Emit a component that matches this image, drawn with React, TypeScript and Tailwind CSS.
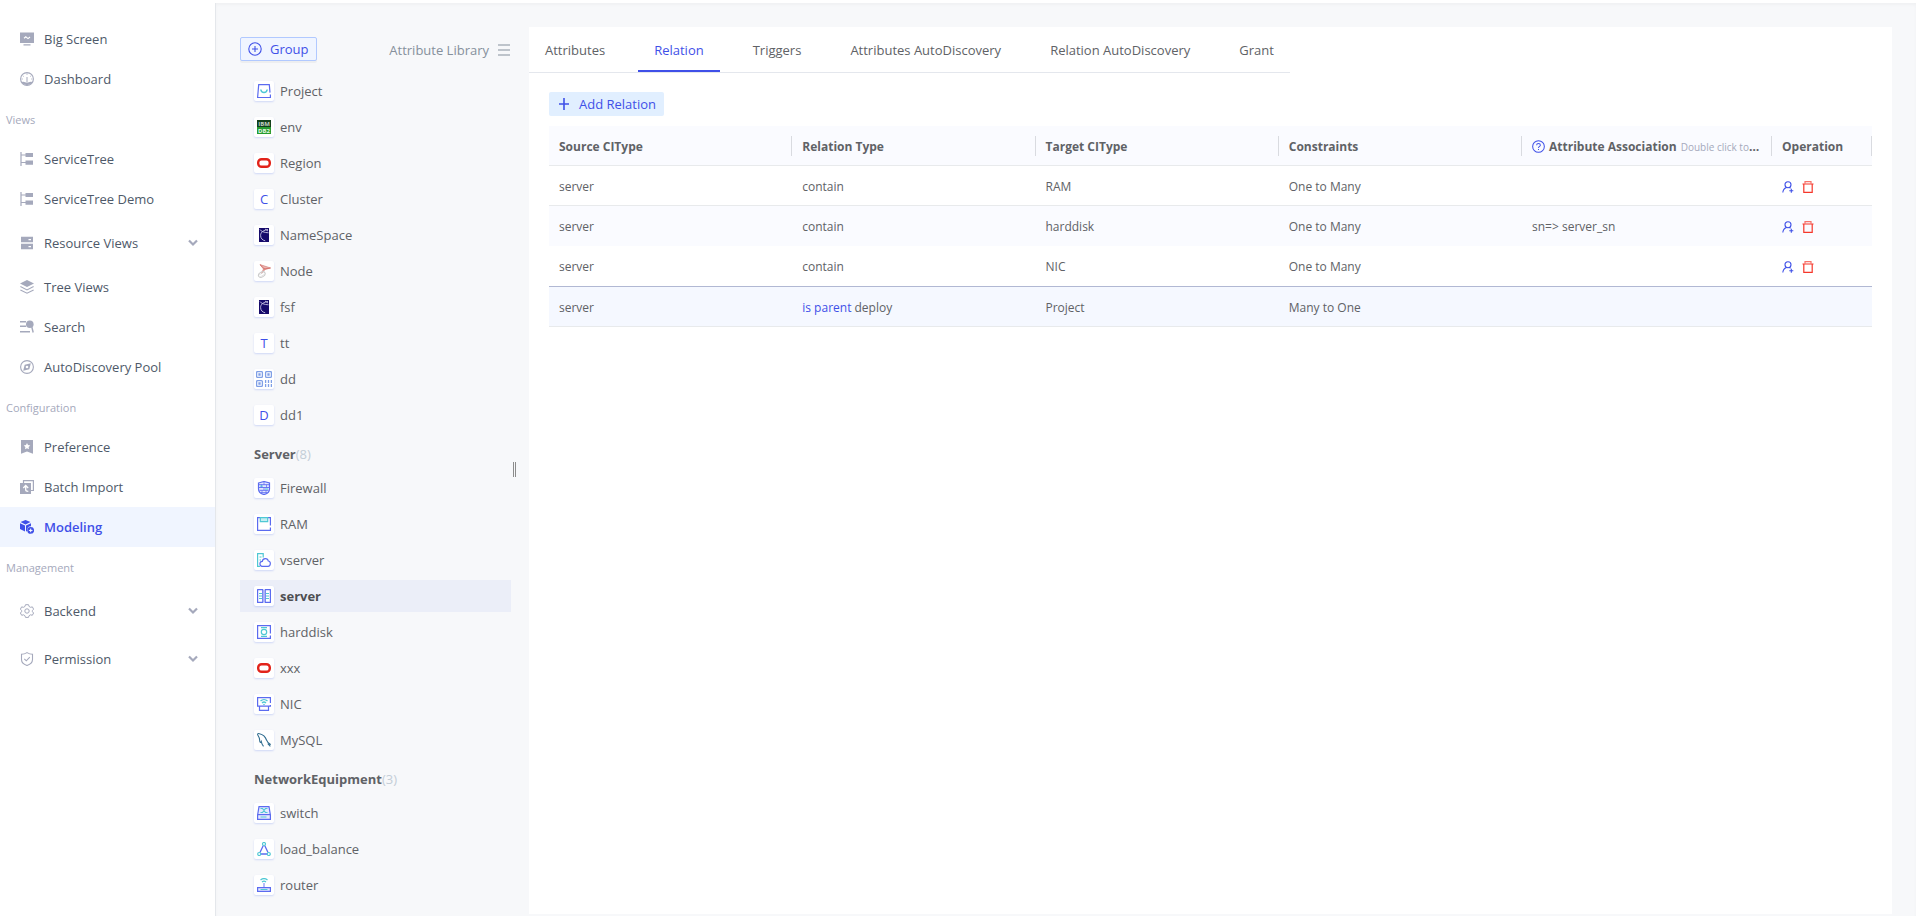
import React from "react";
import clsx from "clsx";

const App = () => {
  return (
    <div className="flex h-screen flex-col bg-white font-['Open_Sans',sans-serif] text-[13px] text-[#606266]">
      <header className="h-[3px] shrink-0 bg-white" />
      <div className="flex min-h-0 flex-1">
        <SideMenu />
        <div className="flex min-w-0 flex-1 flex-col bg-[#f7f8fa] shadow-[inset_0_2px_3px_rgba(0,21,41,0.03)]">
          <div className="flex min-h-0 flex-1 pr-6">
            <TypeList />
            <main className="mt-6 mb-0.5 min-w-0 flex-1 bg-white">
              <Tabs />
              <div className="px-5 pt-[19px]">
                <button className="flex h-6 items-center gap-2 rounded-xs bg-[#e1efff] px-2 text-[#3f50e8]">
                  <svg width="14" height="14" viewBox="0 0 14 14" fill="none" stroke="currentColor" strokeWidth="1.6">
                    <path d="M7 1v12M2 7h10" />
                  </svg>
                  <span className="pt-0.5">Add Relation</span>
                </button>
                <RelationTable />
              </div>
            </main>
          </div>
        </div>
      </div>
    </div>
  );
};

export default App;

const SideMenu = () => {
  return (
    <nav className="flex w-[216px] shrink-0 flex-col border-r border-[#e4e7eb] bg-white pt-4 text-[#4e5969]">
      {menuJson.map((item, index) => {
        if (item.kind === "title") {
          return (
            <div key={index} className="flex h-10 items-center pt-0.5 pl-1.5 text-[11px] text-[#a5a9bc]">
              {item.label}
            </div>
          );
        }
        return (
          <a
            key={index}
            href="#"
            className={clsx(
              "flex h-10 items-center pr-4 pl-5",
              item.kind === "sub" && "my-1",
              item.active && "bg-[#f0f5ff] font-semibold text-[#3f50e8]"
            )}
          >
            <span className={item.active ? "text-[#3f50e8]" : "text-[#a5a9bc]"}>{menuIcons[item.icon!]}</span>
            <span className="ml-2.5 flex-1 pt-0.5">{item.label}</span>
            {item.kind === "sub" && (
              <svg width="12" height="12" viewBox="0 0 12 12" fill="none" stroke="#a5a9bc" strokeWidth="2.2">
                <path d="M2 3.5 6 7.5l4-4" />
              </svg>
            )}
          </a>
        );
      })}
    </nav>
  );
};

const TypeList = () => {
  return (
    <aside className="flex w-[313px] shrink-0 items-center">
      <div className="h-full flex-1 pt-[34px] pl-6">
        <div className="mb-3.5 flex h-6 items-center justify-between">
          <button className="flex h-6 items-center gap-2 rounded-xs border border-[#b1c9ff] bg-[#f0f5ff] px-[7px] text-[#3f50e8] shadow-[0_2px_0_rgba(0,0,0,0.04)]">
            <svg width="14" height="14" viewBox="0 0 14 14" fill="none" stroke="currentColor" strokeWidth="1.1">
              <circle cx="7" cy="7" r="6.2" />
              <path d="M7 4v6M4 7h6" />
            </svg>
            <span className="pt-0.5">Group</span>
          </button>
          <a href="#" className="flex items-center gap-2 pt-0.5 text-[#86909c]">
            <span className="pt-0.5">Attribute Library</span>
            <svg width="14" height="12" viewBox="0 0 14 12" stroke="currentColor" strokeWidth="1.2">
              <path d="M1 1h12M1 6h12M1 11h12" />
            </svg>
          </a>
        </div>
        {groupsJson.map((group, index) => (
          <section key={index}>
            {group.name && (
              <h3 className="flex h-[37px] items-center pt-0.5 pl-3.5 font-bold">
                {group.name}
                <span className="font-normal text-[#c3cdd7]">({group.items.length})</span>
              </h3>
            )}
            {group.items.map((item) => (
              <a
                key={item.name}
                href="#"
                className={clsx(
                  "mb-1 flex h-8 items-center gap-1.5 pl-3.5",
                  item.active && "bg-[#ebeef8] font-bold text-[#4e4e52]"
                )}
              >
                <span className="flex size-5 items-center justify-center rounded-xs bg-white text-[13px] leading-5 font-normal text-[#3f50e8] shadow-[0_1px_2px_rgba(47,84,235,0.2)]">
                  {typeIcons[item.icon] ?? item.icon}
                </span>
                <span className="pt-0.5">{item.name}</span>
              </a>
            ))}
          </section>
        ))}
      </div>
      <div className="mt-5 flex w-[18px] justify-center">
        <span className="mr-3 h-[15px] w-[3px] border-x border-[#8c8c8c]" />
      </div>
    </aside>
  );
};

const Tabs = () => {
  return (
    <div role="tablist" className="flex h-[46px] w-fit gap-[17px] border-b border-[#e4e7ed]">
      {tabsJson.map((tab) => (
        <button
          key={tab}
          role="tab"
          aria-selected={tab === "Relation"}
          className={clsx(
            "h-[45px] border-y-2 border-transparent px-4 pt-0.5",
            tab === "Relation" && "border-b-[#3f50e8] font-medium text-[#3f50e8]"
          )}
        >
          {tab}
        </button>
      ))}
    </div>
  );
};

const RelationTable = () => {
  return (
    <table className="mt-2.5 w-full table-fixed border-separate border-spacing-0 text-left text-xs">
      <colgroup>
        <col />
        <col />
        <col />
        <col />
        <col className="w-[250px]" />
        <col className="w-[100px]" />
      </colgroup>
      <thead>
        <tr className="h-10 bg-[#fafbff]">
          {columnsJson.map((column) => (
            <th key={column} className="border-b border-[#e8eaec] p-0 font-bold">
              <div className="h-5 truncate border-r border-[#d9dbe0] px-2.5 leading-[22px]">
                {column === "Attribute Association" && (
                  <svg
                    className="mr-1 inline-block align-[-2px]"
                    width="13"
                    height="13"
                    viewBox="0 0 14 14"
                    fill="none"
                    stroke="#3f50e8"
                    strokeWidth="1.1"
                  >
                    <circle cx="7" cy="7" r="6.3" />
                    <path d="M5 5.6c0-2.6 4-2.6 4 0C9 7 7 6.9 7 8.6M7 9.6v1.2" />
                  </svg>
                )}
                {column}
                {column === "Attribute Association" && (
                  <span className="ml-1 text-[10px] font-normal text-[#a5a9bc]">Double click to edit</span>
                )}
              </div>
            </th>
          ))}
        </tr>
      </thead>
      <tbody>
        {relationsJson.map((row, index) => (
          <tr
            key={index}
            className={clsx(
              "h-10 *:border-b *:px-2.5 *:pt-0.5 *:pb-0",
              index === 0 && "*:border-[#e8eaec]",
              index === 1 && "bg-[#fafbff] *:border-[#fafbff]",
              index === 2 && "h-[41px] *:border-[#b1b8d3]",
              row.parent && "bg-[#f5f8ff] *:border-[#e8eaec]"
            )}
          >
            <td>server</td>
            <td>
              {row.parent && <span className="text-[#3f50e8]">is parent </span>}
              {row.type}
            </td>
            <td>{row.target}</td>
            <td>{row.constraint}</td>
            <td>{row.association}</td>
            <td>
              {!row.parent && (
                <div className="flex gap-2">
                  <button aria-label="Grant" className="text-[#3f50e8]">
                    <svg width="12" height="12" viewBox="0 0 12 12" fill="none" stroke="currentColor" strokeWidth="1.1">
                      <circle cx="6" cy="3.7" r="3" />
                      <path d="M4.5 6.4C2.3 7.2 1 9 .8 11.5M7.3 6.4l1.2.8M9.3 7.8v4M7.3 9.8h4" />
                    </svg>
                  </button>
                  <button aria-label="Delete" className="text-[#f5372b]">
                    <svg width="12" height="12" viewBox="0 0 12 12" fill="none" stroke="currentColor" strokeWidth="1.2">
                      <path d="M.5 3h11M1.8 3v8.400h8.400V3" />
                      <path d="M3 2.6V.6h6v2" strokeOpacity=".7" />
                    </svg>
                  </button>
                </div>
              )}
            </td>
          </tr>
        ))}
      </tbody>
    </table>
  );
};

interface menuJsonIF {
  kind: "item" | "sub" | "title";
  label: string;
  icon?: string;
  active?: boolean;
}

const menuJson: menuJsonIF[] = [
  { kind: "item", label: "Big Screen", icon: "screen" },
  { kind: "item", label: "Dashboard", icon: "dashboard" },
  { kind: "title", label: "Views" },
  { kind: "item", label: "ServiceTree", icon: "tree" },
  { kind: "item", label: "ServiceTree Demo", icon: "tree" },
  { kind: "sub", label: "Resource Views", icon: "resource" },
  { kind: "item", label: "Tree Views", icon: "layers" },
  { kind: "item", label: "Search", icon: "search" },
  { kind: "item", label: "AutoDiscovery Pool", icon: "compass" },
  { kind: "title", label: "Configuration" },
  { kind: "item", label: "Preference", icon: "bookmark" },
  { kind: "item", label: "Batch Import", icon: "import" },
  { kind: "item", label: "Modeling", icon: "model", active: true },
  { kind: "title", label: "Management" },
  { kind: "sub", label: "Backend", icon: "gear" },
  { kind: "sub", label: "Permission", icon: "shield" },
];

interface groupsJsonIF {
  name?: string;
  items: { name: string; icon: string; active?: boolean }[];
}

const groupsJson: groupsJsonIF[] = [
  {
    items: [
      { name: "Project", icon: "bag" },
      { name: "env", icon: "db2" },
      { name: "Region", icon: "oracle" },
      { name: "Cluster", icon: "C" },
      { name: "NameSpace", icon: "navy" },
      { name: "Node", icon: "sqlserver" },
      { name: "fsf", icon: "navy" },
      { name: "tt", icon: "T" },
      { name: "dd", icon: "qr" },
      { name: "dd1", icon: "D" },
    ],
  },
  {
    name: "Server",
    items: [
      { name: "Firewall", icon: "firewall" },
      { name: "RAM", icon: "ram" },
      { name: "vserver", icon: "vserver" },
      { name: "server", icon: "server", active: true },
      { name: "harddisk", icon: "harddisk" },
      { name: "xxx", icon: "oracle" },
      { name: "NIC", icon: "nic" },
      { name: "MySQL", icon: "mysql" },
    ],
  },
  {
    name: "NetworkEquipment",
    items: [
      { name: "switch", icon: "switch" },
      { name: "load_balance", icon: "balance" },
      { name: "router", icon: "router" },
    ],
  },
];

const tabsJson = ["Attributes", "Relation", "Triggers", "Attributes AutoDiscovery", "Relation AutoDiscovery", "Grant"];

const columnsJson = [
  "Source CIType",
  "Relation Type",
  "Target CIType",
  "Constraints",
  "Attribute Association",
  "Operation",
];

interface relationsJsonIF {
  type: string;
  target: string;
  constraint: string;
  association?: string;
  parent?: boolean;
}

const relationsJson: relationsJsonIF[] = [
  { type: "contain", target: "RAM", constraint: "One to Many" },
  { type: "contain", target: "harddisk", constraint: "One to Many", association: "sn=> server_sn" },
  { type: "contain", target: "NIC", constraint: "One to Many" },
  { type: "deploy", target: "Project", constraint: "Many to One", parent: true },
];

const Icon = ({ children }: { children: React.ReactNode }) => (
  <svg width="14" height="14" viewBox="0 0 14 14" fill="none">
    {children}
  </svg>
);

const menuIcons: Record<string, React.ReactNode> = {
  screen: (
    <Icon>
      <path d="M0 .5h14v10.500H0zM3.500 12.200h7v1.300h-7z" fill="currentColor" />
      <path d="M4 6.200 5.800 4.800 8 6.600 10 5" stroke="#fff" strokeWidth="1.1" />
    </Icon>
  ),
  dashboard: (
    <Icon>
      <circle cx="7" cy="7" r="6.4" stroke="currentColor" strokeWidth="1.1" />
      <path d="M1.600 10.200C4 8.800 5 10.600 7 10.600s3-1.800 5.400-.4A6.400 6.400 0 0 1 1.600 10.200z" fill="currentColor" />
      <path d="M7 5v5M7 1.500v1.200M2.800 3.800l.8.6M11.200 3.800l-.8.6M1.700 7h1M11.300 7h1" stroke="currentColor" />
    </Icon>
  ),
  tree: (
    <Icon>
      <path d="M1 0v14M1 3h5M1 10.500h5" stroke="currentColor" strokeWidth="1.2" />
      <path d="M5.500 1H13v4H5.500zM5.500 8.500H13v4.200H5.500z" fill="currentColor" />
    </Icon>
  ),
  resource: (
    <Icon>
      <path d="M1 .8h12v5.400H1zM1 7.800h12v5.400H1z" fill="currentColor" />
      <path d="M8.500 3h2.500v1.300H8.500zM8.500 10h2.500v1.300H8.500z" fill="#fff" />
    </Icon>
  ),
  layers: (
    <Icon>
      <path d="M7 0l7 3.500L7 7 0 3.500z" fill="currentColor" />
      <path d="M.4 6.600 7 9.900l6.600-3.300M.4 9.900 7 13.200l6.600-3.300" stroke="currentColor" strokeWidth="1.1" />
    </Icon>
  ),
  search: (
    <Icon>
      <path d="M0 1.700h6M0 6.300h6M0 11.700h10" stroke="currentColor" strokeWidth="1.4" />
      <circle cx="9.8" cy="4.3" r="3.8" fill="currentColor" />
      <path d="M11.800 7 13.200 12.500" stroke="currentColor" strokeWidth="1.4" />
    </Icon>
  ),
  compass: (
    <Icon>
      <circle cx="7" cy="7" r="6.4" stroke="currentColor" strokeWidth="1.1" />
      <path d="M10.800 3.200 9.300 9.300 3.200 10.800 4.700 4.700z" fill="currentColor" />
      <circle cx="7" cy="7" r="1.3" fill="#fff" />
    </Icon>
  ),
  bookmark: (
    <Icon>
      <path d="M1 0h12v13.800L7 11.500 1 13.800z" fill="currentColor" />
      <path d="m7 3 1 2.100 2.300.3-1.700 1.600.4 2.300L7 8.200 5 9.300l.4-2.300-1.700-1.600L6 5.100z" fill="#fff" />
    </Icon>
  ),
  import: (
    <Icon>
      <path d="M3.500 3V.6h9.900v9.900H11" stroke="currentColor" strokeWidth="1.2" />
      <path d="M0 3h11v11H0z" fill="currentColor" />
      <path d="M5.700 5.500v4.300c0 1.300 1 1.600 2.600 1.600M3.300 8l2.400-2.500L8.200 8" stroke="#fff" strokeWidth="1.3" />
    </Icon>
  ),
  model: (
    <Icon>
      <path d="M5.500 0 10.500 2 5.500 4.400.5 2zM0 3.200l5 2.300v6L0 9zM6 5.500l5-2.300v3C8.500 6 7 8 7.300 11L6 11.600z" fill="currentColor" />
      <circle cx="10.7" cy="10.4" r="3.4" fill="currentColor" />
      <path d="M10.700 8.600v3.600M8.900 10.400h3.600" stroke="#fff" />
    </Icon>
  ),
  gear: (
    <Icon>
      <path
        d="M5.500.7h3l.6 1.800 1.400.8 1.900-.4 1.200 2.300L12.400 6.500v1.200l1.200 1.300-1.300 2.300-1.800-.5-1.400.9-.6 1.700h-3l-.6-1.700-1.400-.9-1.800.5L.4 9l1.200-1.300V6.500L.4 5.200l1.200-2.300 1.900.4 1.400-.8z"
        stroke="currentColor"
        strokeLinejoin="round"
      />
      <circle cx="7" cy="7" r="2.2" stroke="currentColor" />
    </Icon>
  ),
  shield: (
    <Icon>
      <path
        d="M7 .6c2 1.200 3.700 1.600 5.500 1.600v5.300c0 3-2.500 5-5.500 6-3-1-5.500-3-5.500-6V2.200C3.300 2.200 5 1.800 7 .6z"
        stroke="currentColor"
        strokeWidth="1.1"
      />
      <path d="m4.300 6.800 2 2 3.500-3.600" stroke="currentColor" strokeWidth="1.1" />
    </Icon>
  ),
};

const blue = "#5b6bf0";
const teal = "#4fc8d4";

const typeIcons: Record<string, React.ReactNode> = {
  bag: (
    <Icon>
      <path d="M13.400 10.500v3H.6L1.700.6h10.600l.7 8" stroke={blue} strokeWidth="1.2" />
      <path d="M3.800 5.500c.5 4 5.900 4 6.400 0" stroke={teal} strokeWidth="1.5" />
    </Icon>
  ),
  db2: (
    <Icon>
      <path d="M0 0h14v7H0z" fill="#12401c" />
      <path d="M0 7h14v7H0z" fill="#249c30" />
      <text x="7" y="5.8" textAnchor="middle" fontSize="6" fontWeight="700" fill="#c4d3c8">
        IBM
      </text>
      <text x="7" y="12.7" textAnchor="middle" fontSize="6" fontWeight="700" fill="#e6f8e7">
        DB2
      </text>
    </Icon>
  ),
  oracle: (
    <Icon>
      <rect x="1.2" y="3.2" width="11.600" height="7.600" rx="3.4" stroke="#e2231a" strokeWidth="2.4" />
    </Icon>
  ),
  navy: (
    <Icon>
      <path d="M2 0h10v14H2z" fill="#160a6b" />
      <path
        d="M11 1.500C7 2 3.500 4 3.600 7.500c0 3 2 4.700 4.600 5.300M3 1.500c1 2 4 3 8.500 3.300M8 1l3 2"
        stroke="#c9c6e6"
        strokeWidth=".9"
      />
    </Icon>
  ),
  sqlserver: (
    <Icon>
      <path d="M3 .6 13.500 4 8 5.500 4.500 9.500 6.500 5z" fill="#eab5b1" stroke="#d98c87" strokeWidth=".8" />
      <path d="M3 .6 8 5.500M6.500 5l7-1" stroke="#d46a64" strokeWidth=".8" />
      <ellipse cx="4.8" cy="10.5" rx="3.600" ry="2.400" stroke="#c9c9c9" transform="rotate(-30 4.8 10.5)" />
      <path d="M2 11l5-3M3 13l5-3" stroke="#d9d9d9" strokeWidth=".7" />
    </Icon>
  ),
  qr: (
    <svg width="16" height="16" viewBox="0 0 16 16" fill="none" stroke="#7f9fe6" strokeWidth="1.3">
      <rect x=".6" y=".6" width="5.8" height="5.8" rx="1" />
      <rect x="9.6" y=".6" width="5.8" height="5.8" rx="1" />
      <rect x=".6" y="9.6" width="5.8" height="5.8" rx="1" />
      <path d="M3 3h1v1H3zM12 3h1v1h-1zM3 12h1v1H3z" />
      <path d="M9.600 9v7M12.500 9v7M15.400 9v7" strokeDasharray="3 1" />
    </svg>
  ),
  firewall: (
    <Icon>
      <path
        d="M1.500 2 7 .5 12.500 2v6c0 3-2.500 4.800-5.500 5.600C4 12.800 1.500 11 1.500 8z"
        fill="#e4e8ff"
        stroke={blue}
        strokeWidth="1.2"
      />
      <path d="M2 3.700h10M2 6.500h10M2.500 9.300h9M4 11.700h6" stroke={blue} strokeWidth=".9" />
      <path d="M7 1v2.700M4.500 3.700v2.800M9.500 3.700v2.800M7 6.500v2.800M5 9.300v2.400M9 9.300v2.400" stroke={blue} strokeWidth=".7" />
      <path d="M3 5.100h3M8 8h3" stroke={teal} />
    </Icon>
  ),
  ram: (
    <Icon>
      <path d="M13.400 10.500v2.900H.6V.6h12.800v8" stroke={blue} strokeWidth="1.2" />
      <path d="M3.300.6v4h7.400v-4z" fill="#c5eef2" stroke={teal} strokeWidth="1.2" />
    </Icon>
  ),
  vserver: (
    <Icon>
      <path d="M3 13.400H.6V.6h5.600v4M2.500 4h2M2.500 7h1.500" stroke={teal} strokeWidth="1.2" />
      <path
        d="M5.600 13.400a2.500 2.500 0 0 1-.3-5C5.600 4.900 10.700 4.500 11.300 8c2.800.3 2.700 5.300-.3 5.400z"
        fill="#fff"
        stroke={blue}
        strokeWidth="1.2"
      />
    </Icon>
  ),
  server: (
    <Icon>
      <path d="M5.800.6H.6v12.800h5.200zM8.200.6h5.200v12.800H8.200z" stroke={blue} strokeWidth="1.2" strokeLinejoin="round" />
      <path d="M6.400 1h1.200v12H6.400z" fill="#9ca7f8" />
      <path d="M2 4.500h3M2 7h3M2 9.500h3M9 4.500h3M9 7h3M9 9.500h3" stroke={teal} />
    </Icon>
  ),
  harddisk: (
    <Icon>
      <path d="M13.400 10.500v2.900H.6V.6h12.800v8" stroke={blue} strokeWidth="1.2" />
      <circle cx="7" cy="7" r="2.7" stroke={teal} strokeWidth="1.2" />
      <path d="M4 2.700h6M4 11.300h6" stroke={teal} strokeWidth="1.2" />
    </Icon>
  ),
  nic: (
    <Icon>
      <path d="M13.400 6V.6H.6v8.600h12.800V8M2.500 9.200v4.200h9V9.200" stroke={blue} strokeWidth="1.2" />
      <path d="M3.500 4c2-2 5-2 7 0M5 6c1.200-1.200 2.800-1.200 4 0" stroke={teal} strokeWidth="1.2" />
      <circle cx="7" cy="7.5" r=".8" fill={teal} />
    </Icon>
  ),
  mysql: (
    <Icon>
      <path
        d="M6.500 13.300C5.500 12 4.500 10.500 4.300 8.500 3.500 10 2.800 9.500 2.700 7.500 2.600 5 2 3.800.8 2 .2.8 1.300.3 2.500.7 6 1.500 8.500 4 9.600 7.200c.5 1.600 1.200 2.700 3.600 4l-1.800.1 2 2"
        stroke="#2f6c8f"
        strokeWidth="1.1"
      />
    </Icon>
  ),
  switch: (
    <Icon>
      <path d="M.6 9 2 .6h10L13.400 9v4.400H.6z" fill="#e4e8ff" stroke={blue} strokeWidth="1.2" />
      <path d="M.6 8.600h12.800" stroke={blue} strokeWidth="1.2" />
      <path d="M3.500 2.500h2l3 4h2M3.500 6.500h2l3-4h2M3.500 11h6" stroke={teal} strokeWidth="1.2" />
    </Icon>
  ),
  balance: (
    <Icon>
      <path d="M6.300 3.500 3 10.500M7.700 3.500 11 10.500M4 12h6" stroke={blue} strokeWidth="1.3" />
      <circle cx="7" cy="2" r="1.5" stroke={teal} strokeWidth="1.2" />
      <circle cx="2.2" cy="12" r="1.5" stroke={teal} strokeWidth="1.2" />
      <circle cx="11.8" cy="12" r="1.5" stroke={teal} strokeWidth="1.2" />
    </Icon>
  ),
  router: (
    <Icon>
      <path d="M3.500 2c2-1.700 5-1.700 7 0M5 4c1.200-1 2.800-1 4 0" stroke={teal} strokeWidth="1.2" />
      <path d="M7 5v4.500" stroke="#9ca7f8" strokeWidth="1.5" />
      <path d="M.6 9.600h12.800v3.800H.6z" fill="#e4e8ff" stroke={blue} strokeWidth="1.2" />
      <path d="M3.500 11.500h7" stroke={teal} />
    </Icon>
  ),
};
